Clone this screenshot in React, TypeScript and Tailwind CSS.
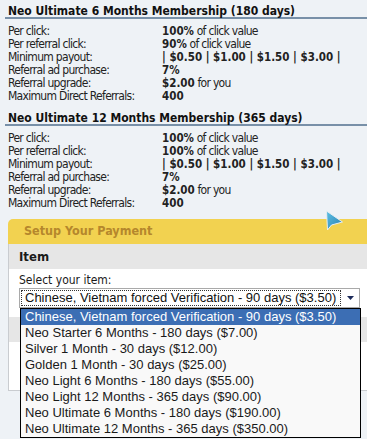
import React from "react";

type Row = { label: string; value: React.ReactNode };

function B({ children }: { children: React.ReactNode }) {
  return <b className="text-[11.5px] tracking-normal">{children}</b>;
}

const payout = <B>| $0.50 | $1.00 | $1.50 | $3.00 |</B>;

const plan6: Row[] = [
  { label: "Per click:", value: <><B>100%</B> of click value</> },
  { label: "Per referral click:", value: <><B>90%</B> of click value</> },
  { label: "Minimum payout:", value: payout },
  { label: "Referral ad purchase:", value: <B>7%</B> },
  { label: "Referral upgrade:", value: <><B>$2.00</B> for you</> },
  { label: "Maximum Direct Referrals:", value: <B>400</B> },
];

const plan12: Row[] = [
  { label: "Per click:", value: <><B>100%</B> of click value</> },
  { label: "Per referral click:", value: <><B>100%</B> of click value</> },
  { label: "Minimum payout:", value: payout },
  { label: "Referral ad purchase:", value: <B>7%</B> },
  { label: "Referral upgrade:", value: <><B>$2.00</B> for you</> },
  { label: "Maximum Direct Referrals:", value: <B>400</B> },
];

const items = [
  "Chinese, Vietnam forced Verification - 90 days ($3.50)",
  "Neo Starter 6 Months - 180 days ($7.00)",
  "Silver 1 Month - 30 days ($12.00)",
  "Golden 1 Month - 30 days ($25.00)",
  "Neo Light 6 Months - 180 days ($55.00)",
  "Neo Light 12 Months - 365 days ($90.00)",
  "Neo Ultimate 6 Months - 180 days ($190.00)",
  "Neo Ultimate 12 Months - 365 days ($350.00)",
];

const tahoma = { fontFamily: "'DejaVu Sans Condensed', 'Liberation Sans', sans-serif" };
const winSans = { fontFamily: "'Liberation Sans', Arial, sans-serif" };

function Plan({ title, rows, className }: { title: string; rows: Row[]; className?: string }) {
  return (
    <div className={className}>
      <div className="ml-[5px] border-b-2 border-[#7890a8] pl-[3px] text-[12px] font-bold leading-[11px] text-[#111]">
        {title}
      </div>
      <div className="mt-[6px] grid grid-cols-[154px_1fr] pl-[8px] text-[12px] leading-[13px] tracking-[-0.7px] text-[#222]">
        {rows.map((r) => (
          <React.Fragment key={r.label}>
            <span>{r.label}</span>
            <span>{r.value}</span>
          </React.Fragment>
        ))}
      </div>
    </div>
  );
}

function Cursor() {
  return (
    <svg className="absolute left-[325px] top-[210px]" width="19" height="22" viewBox="0 0 19 22">
      <defs>
        <linearGradient id="cur" x1="0" y1="0" x2="1" y2="1">
          <stop offset="0" stopColor="#5cc0e6" />
          <stop offset="1" stopColor="#2a7fae" />
        </linearGradient>
      </defs>
      <path d="M1.5 1 L2.5 20 L6.5 15 L17.5 12 Z" fill="url(#cur)" stroke="#e8eef2" strokeWidth="1" />
    </svg>
  );
}

export default function App() {
  return (
    <div className="relative h-[439px] w-[367px] overflow-hidden bg-[#eef2f6] pt-[6px]" style={tahoma}>
      <Plan title="Neo Ultimate 6 Months Membership (180 days)" rows={plan6} />
      <Plan title="Neo Ultimate 12 Months Membership (365 days)" rows={plan12} className="mt-[10px]" />

      <div className="ml-[8px] mt-[9px] w-[380px]">
        <div className="flex h-[25px] items-center rounded-tl-[5px] bg-[#f2d250] pl-[16px] text-[12.5px] font-bold text-[#b5872c]">
          Setup Your Payment
        </div>
        <div className="border-b border-l border-[#c9ccd0] bg-white">
          <div className="flex h-[25px] items-center bg-[#e6e6e6] pl-[10px] text-[13px] font-bold text-[#1a1a1a]">
            Item
          </div>
          <div className="px-[10px] pb-[9px] pt-[4px]">
            <div className="text-[12px] leading-[15px] text-[#1a1a1a]">Select your item:</div>
            <div className="relative w-[341px]">
              <div className="flex h-[20px] items-center border border-[#a9a9a9] bg-white p-[1px]" style={winSans}>
                <div className="flex h-full w-[320px] items-center border border-dotted border-[#333] pl-[3px] text-[13px] text-[#111]">
                  {items[0]}
                </div>
                <svg className="ml-[6px]" width="7" height="4" viewBox="0 0 7 4">
                  <path d="M0 0 H7 L3.5 4 Z" fill="#1c2a5a" />
                </svg>
              </div>
              <div className="absolute left-[1px] top-full z-10 w-[341px] border border-black bg-[#f9f9f9]" style={winSans}>
                {items.map((it, i) => (
                  <div
                    key={it}
                    className={
                      i === 0
                        ? "h-[16px] bg-[#3c6eb4] pl-[4px] text-[13px] leading-[16px] text-white"
                        : "h-[16px] pl-[4px] text-[13px] leading-[16px] text-[#1a1a1a]"
                    }
                  >
                    {it}
                  </div>
                ))}
              </div>
            </div>
          </div>
          <div className="h-[25px] bg-[#e6e6e6]" />
          <div className="h-[48px]" />
        </div>
      </div>

      <Cursor />
    </div>
  );
}
